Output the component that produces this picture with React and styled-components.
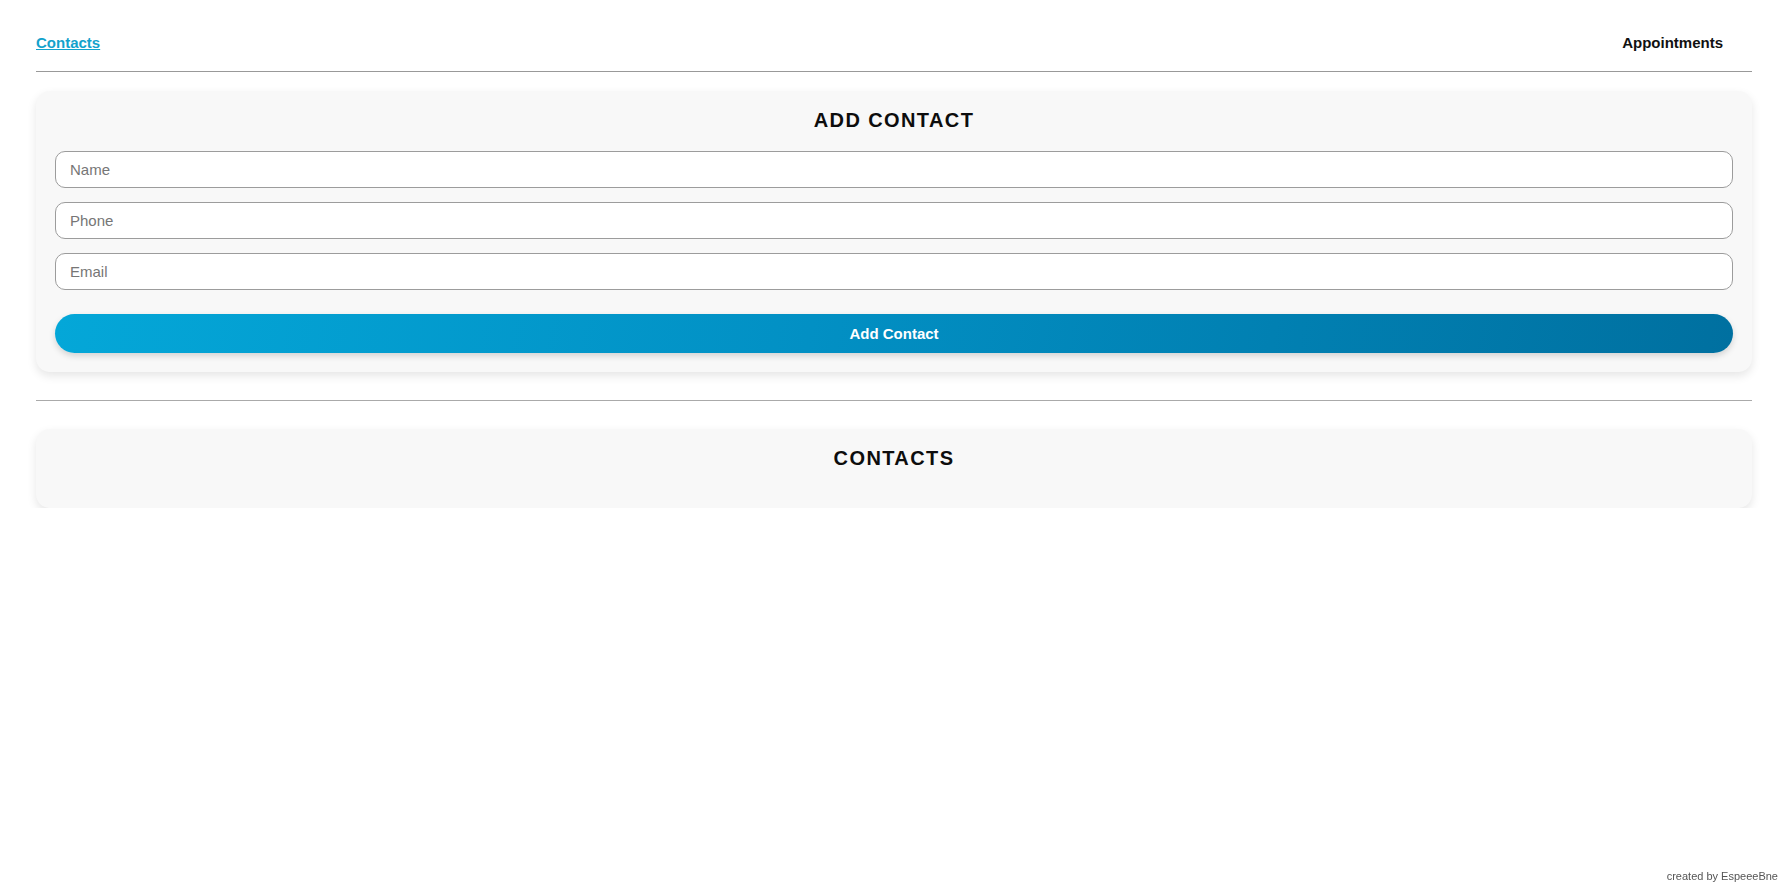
import React from "react";
import styled, { createGlobalStyle } from "styled-components";

const GlobalStyle = createGlobalStyle`
  html, body {
    margin: 0;
    padding: 0;
    background: #ffffff;
    font-family: "Liberation Sans", Arial, sans-serif;
    color: #111;
  }
  * { box-sizing: border-box; }
`;

const Page = styled.div`
  padding: 34px 36px 0;
`;

const Nav = styled.nav`
  display: flex;
  justify-content: space-between;
  align-items: center;
  height: 17px;
`;

const NavItem = styled.a`
  font-size: 15px;
  line-height: 17px;
  font-weight: bold;
  color: ${(p) => (p.$active ? "#13a2cc" : "#111")};
  text-decoration: ${(p) => (p.$active ? "underline" : "none")};
  padding-right: ${(p) => (p.$active ? "0" : "29px")};
  cursor: pointer;
`;

const Divider = styled.hr`
  border: none;
  height: 1px;
  background: ${(p) => p.$color || "#999"};
  margin: ${(p) => p.$margin};
`;

const Card = styled.section`
  background: #f8f8f8;
  border-radius: 14px;
  padding: 17px 19px 19px;
  box-shadow: 0 4px 10px rgba(0, 0, 0, 0.1);
`;

const Title = styled.h2`
  margin: 0 0 19px;
  text-align: center;
  font-size: 20px;
  line-height: 24px;
  font-weight: bold;
  letter-spacing: 1.4px;
  color: #0d0d0d;
`;

const Form = styled.form`
  display: flex;
  flex-direction: column;
  gap: 14px;
`;

const Input = styled.input`
  width: 100%;
  height: 37px;
  border: 1px solid #9c9c9c;
  border-radius: 10px;
  background: #fff;
  padding: 0 14px;
  font-family: "Liberation Sans", Arial, sans-serif;
  font-size: 15px;
  color: #222;
  outline: none;
  &::placeholder {
    color: #767676;
  }
`;

const Button = styled.button`
  margin-top: 10px;
  height: 39px;
  border: none;
  border-radius: 20px;
  background: linear-gradient(100deg, #04a7d8 0%, #0290c4 45%, #0070a0 100%);
  color: #fff;
  font-family: "Liberation Sans", Arial, sans-serif;
  font-size: 15px;
  font-weight: bold;
  box-shadow: 0 3px 6px rgba(0, 0, 0, 0.15);
  cursor: pointer;
`;

const Footer = styled.div`
  position: fixed;
  right: 10px;
  bottom: 9px;
  font-size: 11px;
  line-height: 13px;
  color: #555;
`;

export default function App() {
  return (
    <>
      <GlobalStyle />
      <Page>
        <Nav>
          <NavItem $active>Contacts</NavItem>
          <NavItem>Appointments</NavItem>
        </Nav>
        <Divider $margin="20px 0 19px" $color="#999" />
        <Card>
          <Title>ADD CONTACT</Title>
          <Form onSubmit={(e) => e.preventDefault()}>
            <Input placeholder="Name" />
            <Input placeholder="Phone" />
            <Input placeholder="Email" />
            <Button type="submit">Add Contact</Button>
          </Form>
        </Card>
        <Divider $margin="28px 0 28px" $color="#aaa" />
        <Card>
          <Title>CONTACTS</Title>
        </Card>
      </Page>
      <Footer>created by EspeeeBne</Footer>
    </>
  );
}
